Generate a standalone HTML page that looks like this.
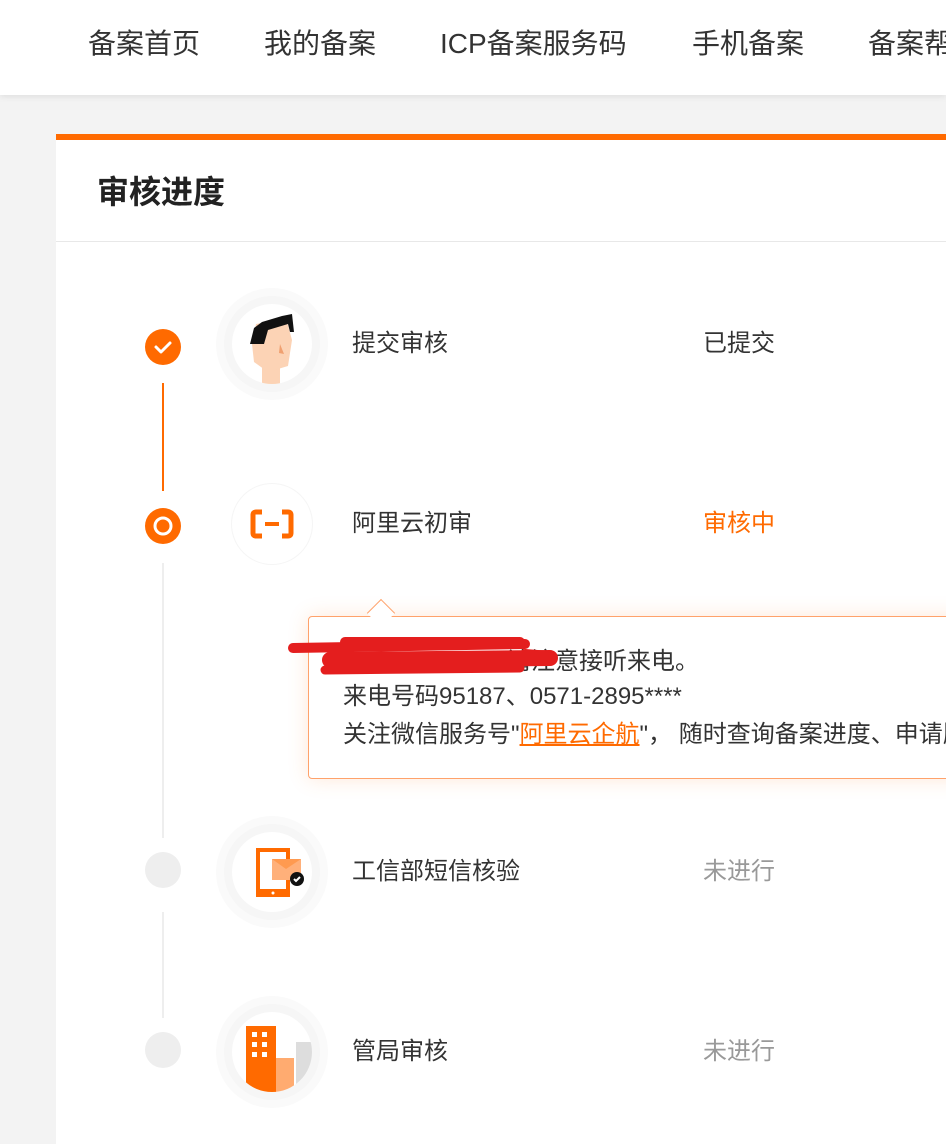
<!DOCTYPE html>
<html><head><meta charset="utf-8"><style>
*{margin:0;padding:0;box-sizing:border-box}
body{width:946px;height:1138px;overflow:hidden;background:#f3f3f3;font-family:"Liberation Sans","Noto Sans CJK SC",sans-serif;position:relative}
.hdr{position:absolute;left:0;top:0;width:946px;height:95px;background:#fff;box-shadow:0 2px 6px rgba(0,0,0,.08)}
.hdr span{position:absolute;top:25px;font-size:28px;color:#333;white-space:nowrap;line-height:38px}
.card{position:absolute;left:56px;top:134px;width:900px;height:1010px;background:#fff;border-top:6px solid #ff6a00}
.title{position:absolute;left:97px;top:171px;font-size:32px;font-weight:bold;color:#222;line-height:42px}
.sep{position:absolute;left:56px;top:241px;width:890px;height:1px;background:#e8e8e8}
.dot{position:absolute;width:36px;height:36px;border-radius:50%;left:145px}
.line{position:absolute;left:162px;width:2px}
.ic{position:absolute;left:232px;width:80px;height:80px;border-radius:50%;background:#fff;box-shadow:0 0 0 8px #f6f6f6,0 0 0 16px #fafafa;overflow:hidden}
.lbl{position:absolute;left:352px;font-size:24px;color:#333;line-height:34px}
.st{position:absolute;left:703px;font-size:24px;line-height:34px;color:#333}
.pop{position:absolute;left:308px;top:616px;width:660px;height:163px;border:1.5px solid #ffa26b;border-radius:4px;background:#fff;box-shadow:0 0 20px rgba(255,140,60,.2)}
.pop p{position:absolute;left:34px;font-size:24px;color:#333;white-space:nowrap;line-height:32px}
.arr{position:absolute;left:371px;top:603px;width:20px;height:20px;background:#fff;border-left:1.5px solid #ffa26b;border-top:1.5px solid #ffa26b;transform:rotate(45deg)}
</style></head><body>
<div class="hdr">
<span style="left:88px">备案首页</span><span style="left:264px">我的备案</span><span style="left:440px">ICP备案服务码</span><span style="left:692px">手机备案</span><span style="left:868px">备案帮助</span>
</div>
<div class="card"></div>
<div class="title">审核进度</div>
<div class="sep"></div>

<div class="line" style="top:383px;height:108px;background:#ff6a00"></div>
<div class="line" style="top:563px;height:275px;background:#eee"></div>
<div class="line" style="top:912px;height:106px;background:#eee"></div>

<div class="dot" style="top:329px;background:#ff6a00"><svg width="36" height="36"><path d="M11 18l5 5 9-9" stroke="#fff" stroke-width="3" fill="none" stroke-linecap="round" stroke-linejoin="round"/></svg></div>
<div class="dot" style="top:508px;background:#ff6a00"><svg width="36" height="36"><circle cx="18" cy="18" r="8" fill="none" stroke="#fff" stroke-width="3"/></svg></div>
<div class="dot" style="top:852px;background:#eee"></div>
<div class="dot" style="top:1032px;background:#eee"></div>

<div class="ic" style="top:304px"><svg width="80" height="80"><path d="M30 90V60h18v30z" fill="#fcd3b5"/><path d="M20 40l4-20 30-6 6 22-4 26-20 6-14-10z" fill="#fcd3b5"/><path d="M18 40l4-16 8-6 20-6 10-2 2 18-4 0-2-8-20 6-4 14-6 0z" fill="#111"/><path d="M48 40l4 10-5-1z" fill="#f0a070"/></svg></div>
<div class="ic" style="top:484px;box-shadow:0 0 0 1px #f5f5f5"><svg width="80" height="80"><path d="M30 28h-6q-3 0-3 3v18q0 3 3 3h6M50 28h6q3 0 3 3v18q0 3-3 3h-6" stroke="#ff6a00" stroke-width="5" fill="none"/><rect x="33" y="38" width="14" height="4" fill="#ff6a00"/></svg></div>
<div class="ic" style="top:832px"><svg width="80" height="80"><rect x="24" y="16" width="34" height="49" fill="#ff6a00"/><rect x="28" y="20" width="26" height="37" fill="#fff"/><circle cx="41" cy="61" r="1.5" fill="#fff"/><rect x="40" y="27" width="29" height="21" fill="#ffb07a"/><path d="M40 27l14 10 15-10" fill="#ff9a50"/><circle cx="65" cy="47" r="7" fill="#111"/><path d="M62 47l2 2 4-4" stroke="#fff" stroke-width="2" fill="none"/></svg></div>
<div class="ic" style="top:1012px"><svg width="80" height="80"><rect x="14" y="14" width="30" height="70" fill="#ff6a00"/><g fill="#fff"><rect x="20" y="20" width="5" height="5"/><rect x="30" y="20" width="5" height="5"/><rect x="20" y="30" width="5" height="5"/><rect x="30" y="30" width="5" height="5"/><rect x="20" y="40" width="5" height="5"/><rect x="30" y="40" width="5" height="5"/></g><rect x="44" y="46" width="18" height="40" fill="#ffab70"/><rect x="64" y="30" width="16" height="50" fill="#ddd"/></svg></div>

<div class="lbl" style="top:327px">提交审核</div><div class="st" style="top:327px">已提交</div>
<div class="lbl" style="top:507px">阿里云初审</div><div class="st" style="top:507px;color:#ff6a00">审核中</div>
<div class="lbl" style="top:855px">工信部短信核验</div><div class="st" style="top:855px;color:#999">未进行</div>
<div class="lbl" style="top:1035px">管局审核</div><div class="st" style="top:1035px;color:#999">未进行</div>

<div class="pop">
<p style="top:29px;left:198px">请注意接听来电。</p>
<p style="top:64px">来电号码95187、0571-2895****</p>
<p style="top:102px">关注微信服务号"<span style="color:#ff6a00;text-decoration:underline">阿里云企航</span>"， 随时查询备案进度、申请服务</p>
</div>
<div class="arr"></div>
<svg style="position:absolute;left:285px;top:630px" width="290" height="50"><g stroke="#e41e1e" stroke-linecap="round" fill="none"><path d="M8 18L240 14" stroke-width="10"/><path d="M60 12L235 12" stroke-width="10"/><path d="M45 30L265 28" stroke-width="16"/><path d="M40 40L235 38" stroke-width="9"/><path d="M240 24L265 26" stroke-width="10"/></g></svg>
</body></html>
